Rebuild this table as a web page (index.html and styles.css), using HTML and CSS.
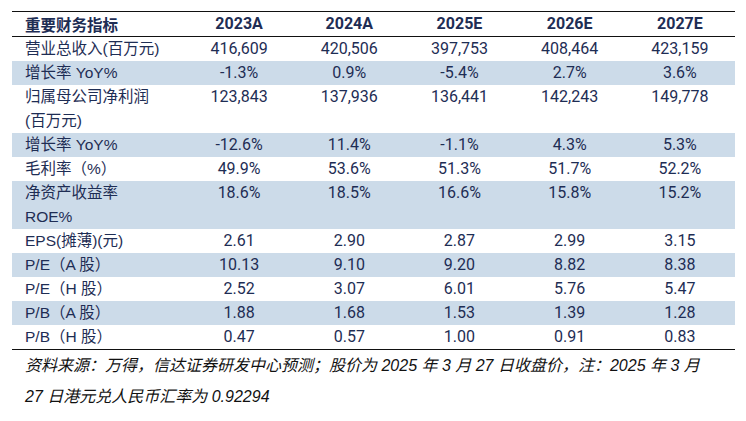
FILE: index.html
```html
<!DOCTYPE html>
<html lang="zh-CN">
<head>
<meta charset="utf-8">
<title>重要财务指标</title>
<link rel="stylesheet" href="styles.css">
</head>
<body>
<div class="wrap">
  <table class="fin">
    <thead>
      <tr>
        <th class="lbl">重要财务指标</th>
        <th>2023A</th><th>2024A</th><th>2025E</th><th>2026E</th><th>2027E</th>
      </tr>
    </thead>
    <tbody>
      <tr><td class="lbl">营业总收入(百万元)</td><td>416,609</td><td>420,506</td><td>397,753</td><td>408,464</td><td>423,159</td></tr>
      <tr class="alt"><td class="lbl">增长率 YoY%</td><td>-1.3%</td><td>0.9%</td><td>-5.4%</td><td>2.7%</td><td>3.6%</td></tr>
      <tr><td class="lbl">归属母公司净利润<br>(百万元)</td><td>123,843</td><td>137,936</td><td>136,441</td><td>142,243</td><td>149,778</td></tr>
      <tr class="alt"><td class="lbl">增长率 YoY%</td><td>-12.6%</td><td>11.4%</td><td>-1.1%</td><td>4.3%</td><td>5.3%</td></tr>
      <tr><td class="lbl">毛利率（%）</td><td>49.9%</td><td>53.6%</td><td>51.3%</td><td>51.7%</td><td>52.2%</td></tr>
      <tr class="alt"><td class="lbl">净资产收益率<br>ROE%</td><td>18.6%</td><td>18.5%</td><td>16.6%</td><td>15.8%</td><td>15.2%</td></tr>
      <tr><td class="lbl">EPS(摊薄)(元)</td><td>2.61</td><td>2.90</td><td>2.87</td><td>2.99</td><td>3.15</td></tr>
      <tr class="alt"><td class="lbl">P/E（A 股）</td><td>10.13</td><td>9.10</td><td>9.20</td><td>8.82</td><td>8.38</td></tr>
      <tr><td class="lbl">P/E（H 股）</td><td>2.52</td><td>3.07</td><td>6.01</td><td>5.76</td><td>5.47</td></tr>
      <tr class="alt"><td class="lbl">P/B（A 股）</td><td>1.88</td><td>1.68</td><td>1.53</td><td>1.39</td><td>1.28</td></tr>
      <tr><td class="lbl">P/B（H 股）</td><td>0.47</td><td>0.57</td><td>1.00</td><td>0.91</td><td>0.83</td></tr>
    </tbody>
  </table>
  <p class="note">资料来源：万得，信达证券研发中心预测；股价为 2025 年 3 月 27 日收盘价，注：2025 年 3 月<br>27 日港元兑人民币汇率为 0.92294</p>
</div>
</body>
</html>
```
FILE: styles.css
```css
html, body {
  margin: 0;
  padding: 0;
  background: #ffffff;
}

.wrap {
  padding: 11px 0 0 12px;
  width: 723px;
}

.fin {
  width: 723px;
  border-collapse: collapse;
  table-layout: fixed;
  border-top: 1px solid #111111;
  border-bottom: 1px solid #111111;
  color: #1e2d54;
}

.fin th,
.fin td {
  padding: 0;
  height: 24px;
  line-height: 24px;
  font-size: 16px;
  text-align: center;
  vertical-align: top;
  white-space: nowrap;
  font-family: Roboto, "Liberation Sans", "Noto Sans CJK SC", sans-serif;
  font-weight: 400;
}

.fin thead th {
  font-weight: 700;
  border-bottom: 1px solid #111111;
}

.fin .lbl {
  width: 159px;
  padding-left: 13px;
  text-align: left;
  font-size: 15.5px;
  font-family: "Liberation Sans", "Noto Sans CJK SC", sans-serif;
}

.fin thead .lbl {
  font-family: "Noto Sans CJK SC", sans-serif;
  font-weight: 700;
}

.fin .alt td {
  background: #ccdbe9;
}

.note {
  margin: 0;
  padding-left: 13px;
  font-family: "Liberation Sans", "Noto Sans CJK SC", sans-serif;
  font-style: italic;
  font-size: 16px;
  line-height: 31px;
  color: #111111;
}
```
